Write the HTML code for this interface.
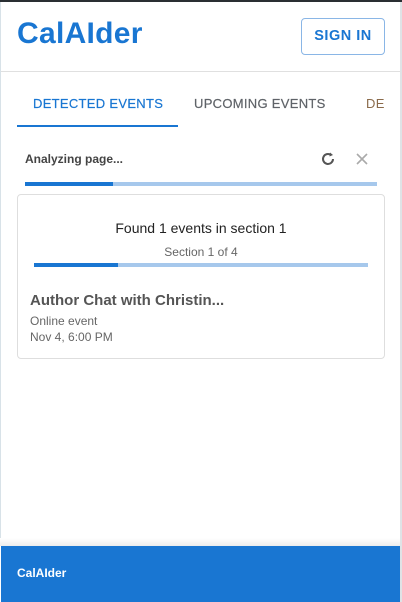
<!DOCTYPE html>
<html><head><meta charset="utf-8"><style>
*{margin:0;padding:0;box-sizing:border-box}
body{width:402px;height:602px;overflow:hidden;background:#fff;font-family:"Liberation Sans",Arial,sans-serif;position:relative}
.a{position:absolute}
</style></head><body>
<div class="a" style="left:0;top:0;width:402px;height:2px;background:#2a2f33"></div>
<div class="a" style="left:0;top:2px;width:1px;height:544px;background:#d8e2e8"></div>
<div class="a" style="right:0;top:2px;width:2px;height:600px;background:#dfe3e6"></div>
<div class="a" style="left:17px;top:17px;font-size:30px;font-weight:bold;color:#1976d2;letter-spacing:0.3px">CalAIder</div>
<div class="a" style="left:301px;top:18px;width:84px;height:37px;border:1px solid #8ab6e6;border-radius:4px;color:#1976d2;font-size:14.5px;font-weight:bold;text-align:center;line-height:35px;letter-spacing:0.5px">SIGN IN</div>
<div class="a" style="left:1px;top:71px;width:399px;height:1px;background:#e0e0e0"></div>
<div class="a" style="left:33px;top:96px;font-size:13px;color:#1976d2;letter-spacing:0.3px;-webkit-text-stroke:0.2px #1976d2">DETECTED EVENTS</div>
<div class="a" style="left:194px;top:96px;font-size:13px;color:#5f6368;letter-spacing:0.3px;-webkit-text-stroke:0.2px #5f6368">UPCOMING EVENTS</div>
<div class="a" style="left:366px;top:96px;width:19px;overflow:hidden;white-space:nowrap;font-size:13px;color:#8a6a4a;letter-spacing:0.3px">DEBUG</div>
<div class="a" style="left:17px;top:125px;width:161px;height:2px;background:#1976d2"></div>
<div class="a" style="left:25px;top:152px;font-size:12px;font-weight:bold;color:#444">Analyzing page...</div>
<svg class="a" style="left:320px;top:151px" width="16" height="16" viewBox="0 0 16 16"><path d="M13 8a5 5 0 1 1-2-4" fill="none" stroke="#555" stroke-width="2"/><path d="M10 1.5l3 2.5-3.5 1.5z" fill="#555"/></svg>
<svg class="a" style="left:355px;top:152px" width="14" height="14" viewBox="0 0 14 14"><path d="M2 2l10 10M12 2L2 12" stroke="#aaa" stroke-width="1.6"/></svg>
<div class="a" style="left:25px;top:182px;width:352px;height:4px;background:#a6c8ec"></div>
<div class="a" style="left:25px;top:182px;width:88px;height:4px;background:#1976d2"></div>
<div class="a" style="left:17px;top:194px;width:368px;height:165px;border:1px solid #dedede;border-radius:4px"></div>
<div class="a" style="left:17px;top:220px;width:368px;text-align:center;font-size:14px;color:#222">Found 1 events in section 1</div>
<div class="a" style="left:17px;top:245px;width:368px;text-align:center;font-size:12px;color:#666">Section 1 of 4</div>
<div class="a" style="left:34px;top:263px;width:334px;height:4px;background:#a6c8ec"></div>
<div class="a" style="left:34px;top:263px;width:84px;height:4px;background:#1976d2"></div>
<div class="a" style="left:30px;top:292px;font-size:15px;font-weight:bold;color:#555">Author Chat with Christin...</div>
<div class="a" style="left:30px;top:314px;font-size:12px;color:#666">Online event</div>
<div class="a" style="left:30px;top:330px;font-size:12px;color:#666">Nov 4, 6:00 PM</div>
<div class="a" style="left:0;top:538px;width:400px;height:8px;background:linear-gradient(#fff,#ececec)"></div>
<div class="a" style="left:1px;top:546px;width:399px;height:56px;background:#1976d2"></div>
<div class="a" style="left:17px;top:566px;font-size:12px;font-weight:bold;color:#fff">CalAIder</div>
</body></html>
